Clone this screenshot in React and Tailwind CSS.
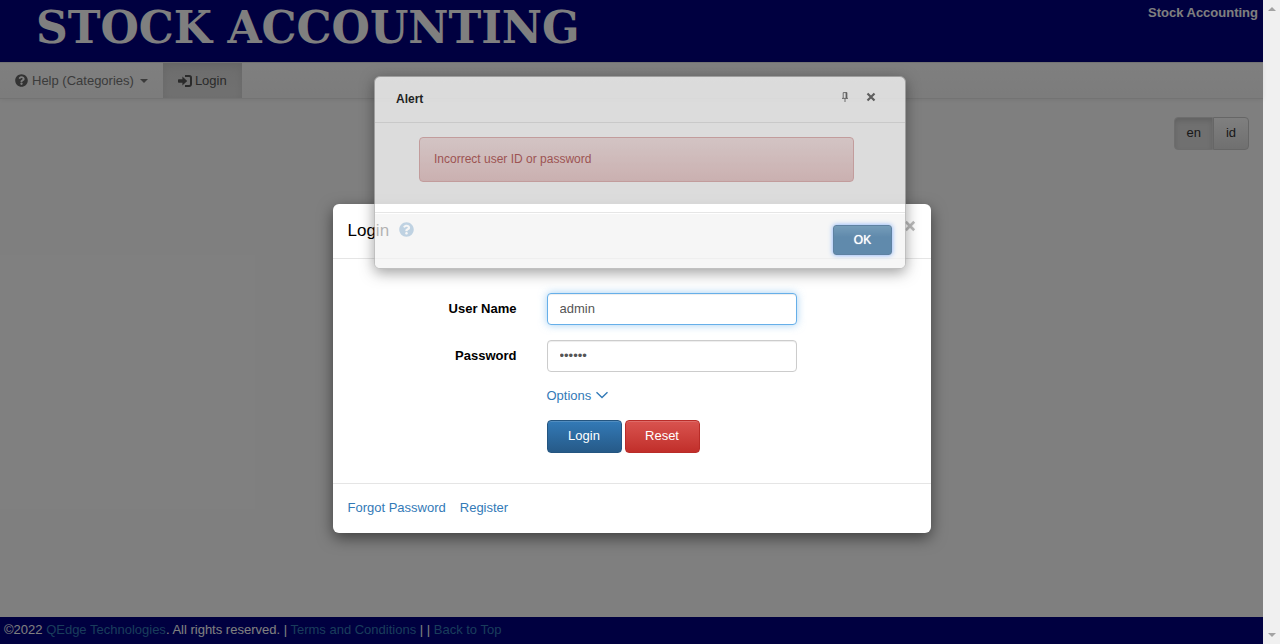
import { FaQuestionCircle } from "react-icons/fa";

function LoginIcon() {
  return (
    <svg viewBox="0 0 14 12" className="h-3 w-3.5" aria-hidden="true">
      <path d="M0 4.9Q0 4.2.7 4.2H4.4V1.6L9.2 6 4.4 10.4V7.8H.7Q0 7.8 0 7.1z" fill="currentColor" />
      <path d="M7 1h4.2a1.8 1.8 0 0 1 1.8 1.8v6.4a1.8 1.8 0 0 1-1.8 1.8H7" fill="none" stroke="currentColor" strokeWidth="2" />
    </svg>
  );
}

function CrossIcon({ className }) {
  return (
    <svg viewBox="0 0 10 10" className={className} aria-hidden="true">
      <path d="M1.5 1.5l7 7M8.5 1.5l-7 7" fill="none" stroke="currentColor" strokeWidth="2.2" />
    </svg>
  );
}

function PinIcon() {
  return (
    <svg viewBox="0 0 8 10" className="h-2.5 w-2" aria-hidden="true">
      <path d="M2.2 6V.6h3.6V6M1 6.4h6M4 6.6V10" fill="none" stroke="currentColor" strokeWidth="0.9" />
      <path d="M4.6.6h1.5v5.6H4.6z" fill="currentColor" />
    </svg>
  );
}

function Header() {
  return (
    <header className="flex h-[62px] items-start justify-between bg-[#000080] pr-[5px] pl-9 text-white">
      <h1 className="pt-1 font-['DejaVu_Serif','Liberation_Serif',serif] text-[44px] leading-12 font-bold whitespace-nowrap">
        STOCK ACCOUNTING
      </h1>
      <strong className="pt-[3px] leading-[19px]">Stock Accounting</strong>
    </header>
  );
}

function NavBar() {
  return (
    <nav className="flex h-[37px] border-y border-[#e7e7e7] bg-linear-to-b from-white to-[#f8f8f8] text-[#777] shadow-[0_1px_5px_rgba(0,0,0,0.075)]">
      <button type="button" className="flex items-center gap-1 px-[15px]">
        <FaQuestionCircle className="size-[13px] text-[#666]" />
        Help (Categories)
        <span className="ml-0.5 border-x-4 border-t-4 border-x-transparent border-t-[#777]" />
      </button>
      <a
        href="#login"
        className="flex items-center gap-[3px] bg-linear-to-b from-[#dbdbdb] to-[#e2e2e2] px-[15px] text-[#555] shadow-[inset_0_3px_9px_rgba(0,0,0,0.075)]"
      >
        <LoginIcon />
        Login
      </a>
    </nav>
  );
}

function LanguageSwitch() {
  return (
    <div className="flex justify-end pt-[18px] pr-3.5 text-[#333]">
      <button
        type="button"
        aria-pressed="true"
        className="h-[33px] rounded-l border border-[#dbdbdb] bg-[#e0e0e0] px-[11px] pb-0.5 shadow-[inset_0_3px_5px_rgba(0,0,0,0.125)]"
      >
        en
      </button>
      <button
        type="button"
        aria-pressed="false"
        className="h-[33px] rounded-r border border-[#ccc] bg-linear-to-b from-white to-[#e0e0e0] px-3 pb-0.5"
      >
        id
      </button>
    </div>
  );
}

function Footer() {
  return (
    <footer className="h-[27px] bg-[#000080] pl-1 leading-[26px] text-white">
      ©2022{" "}
      <a href="#company" className="text-[#337ab7]">QEdge Technologies</a>
      . All rights reserved. |{" "}
      <a href="#terms" className="text-[#337ab7]">Terms and Conditions</a>
      {" | | "}
      <a href="#top" className="text-[#337ab7]">Back to Top</a>
    </footer>
  );
}

function Field({ id, label, type, value, className }) {
  return (
    <>
      <label htmlFor={id} className="text-right font-bold">{label}</label>
      <input
        id={id}
        type={type}
        defaultValue={value}
        className={`h-8 w-[250px] rounded border bg-white px-3 pb-0.5 text-[#555] outline-none ${className}`}
      />
    </>
  );
}

function LoginDialog() {
  return (
    <section
      role="dialog"
      aria-labelledby="login-title"
      className="w-[598px] rounded-md bg-white text-black shadow-[0_5px_15px_rgba(0,0,0,0.5)]"
    >
      <header className="flex h-[55px] items-start justify-between border-b border-[#e5e5e5] px-[15px]">
        <div className="flex items-center gap-2.5 pt-[15px]">
          <h2 id="login-title" className="text-[17px] leading-6">Login</h2>
          <button type="button" aria-label="Help" className="pb-1 text-[#337ab7]">
            <FaQuestionCircle className="size-[15px]" />
          </button>
        </div>
        <button type="button" aria-label="Close login" className="pt-4 text-[#bbb]">
          <CrossIcon className="size-3" />
        </button>
      </header>
      <form className="grid grid-cols-[184px_1fr] items-center gap-x-[30px] gap-y-[15px] pt-[34px] pb-[30px]">
        <Field
          id="username"
          label="User Name"
          type="text"
          value="admin"
          className="border-[#66afe9] shadow-[inset_0_1px_1px_rgba(0,0,0,0.075),0_0_8px_rgba(102,175,233,0.6)]"
        />
        <Field
          id="password"
          label="Password"
          type="password"
          value="secret"
          className="border-[#ccc] shadow-[inset_0_1px_1px_rgba(0,0,0,0.075)]"
        />
        <a href="#options" className="col-start-2 flex h-[18px] items-center gap-1 text-[#337ab7]">
          Options
          <svg viewBox="0 0 14 8" className="mb-0.5 h-2 w-3.5" aria-hidden="true">
            <path d="M1.5 1.2L7 6.5l5.5-5.3" fill="none" stroke="currentColor" strokeWidth="1.4" />
          </svg>
        </a>
        <div className="col-start-2 flex gap-[3px] text-white [text-shadow:0_-1px_0_rgba(0,0,0,0.2),0_0_1px_#fff]">
          <button
            type="button"
            className="h-[33px] w-[75px] rounded border border-[#245580] bg-linear-to-b from-[#337ab7] to-[#265a88] pb-0.5 shadow-[inset_0_1px_0_rgba(255,255,255,0.15)]"
          >
            Login
          </button>
          <button
            type="reset"
            className="h-[33px] w-[75px] rounded border border-[#b92c28] bg-linear-to-b from-[#d9534f] to-[#c12e2a] pb-0.5 shadow-[inset_0_1px_0_rgba(255,255,255,0.15)]"
          >
            Reset
          </button>
        </div>
      </form>
      <footer className="flex h-[50px] items-center gap-3.5 border-t border-[#e5e5e5] px-[15px] pb-0.5 text-[#337ab7]">
        <a href="#forgot">Forgot Password</a>
        <a href="#register">Register</a>
      </footer>
    </section>
  );
}

function AlertDialog() {
  return (
    <section
      role="alertdialog"
      aria-labelledby="alert-title"
      className="w-[532px] overflow-hidden rounded-md border border-[#aaa] bg-white text-xs text-black opacity-73 shadow-[0_4px_14px_rgba(0,0,0,0.5)]"
    >
      <header className="flex h-[46px] items-start justify-between border-b border-[#e5e5e5] pr-[29px] pl-[21px]">
        <h2 id="alert-title" className="pt-[13px] leading-[18px] font-bold">Alert</h2>
        <div className="flex items-center gap-[17px] pt-[15px] text-[#555]">
          <button type="button" aria-label="Pin"><PinIcon /></button>
          <button type="button" aria-label="Close alert"><CrossIcon className="size-2.5" /></button>
        </div>
      </header>
      <div className="pt-3.5 pr-[51px] pb-[30px] pl-11">
        <p className="h-[45px] rounded border border-[#dca7a7] bg-linear-to-b from-[#f2dede] to-[#e7c3c3] px-3.5 leading-[43px] text-[#a94442]">
          Incorrect user ID or password
        </p>
      </div>
      <footer className="flex h-14 items-start justify-end border-t border-[#ddd] bg-[#f3f3f3] pt-3 pr-[13px] shadow-[inset_0_1px_0_#fff]">
        <button
          type="button"
          className="h-[30px] w-[59px] rounded-[3px] border border-[#245580] bg-linear-to-b from-[#4379a0] to-[#265f8e] to-40% text-white shadow-[0_0_5px_#4d90fe] [text-shadow:0_0_1px_#fff]"
        >
          OK
        </button>
      </footer>
    </section>
  );
}

function ScrollTrack() {
  return (
    <div aria-hidden="true" className="flex w-[17px] flex-col items-center justify-between bg-[#f0f0f0] py-[7px]">
      <span className="border-x-4 border-b-4 border-x-transparent border-b-[#a3a3a3]" />
      <span className="border-x-4 border-t-4 border-x-transparent border-t-[#a3a3a3]" />
    </div>
  );
}

export default function App() {
  return (
    <div className="relative flex min-h-screen font-['Liberation_Sans',Arial,sans-serif] text-[13px]">
      <div className="relative flex min-w-0 flex-1 flex-col bg-white">
        <Header />
        <NavBar />
        <main className="flex-1">
          <LanguageSwitch />
        </main>
        <Footer />
        <div className="absolute inset-0 flex items-start justify-center bg-black/50 pt-51">
          <LoginDialog />
        </div>
      </div>
      <ScrollTrack />
      <div className="absolute inset-x-0 top-0 flex justify-center pt-19">
        <AlertDialog />
      </div>
    </div>
  );
}
